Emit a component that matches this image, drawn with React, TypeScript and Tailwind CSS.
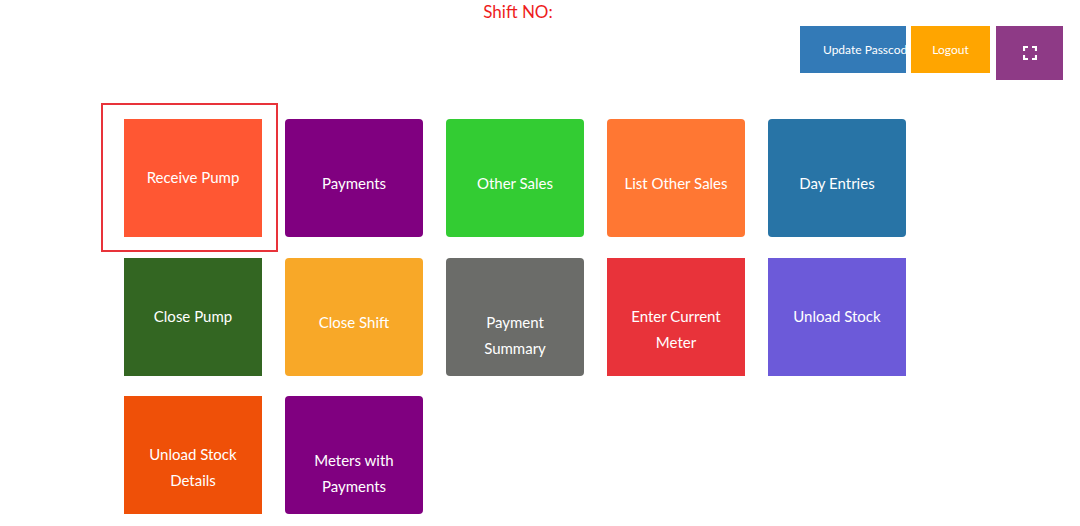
import React from "react";

type Tile = { label: string[]; bg: string; rounded: boolean };

const tiles: Tile[] = [
  { label: ["Receive Pump"], bg: "bg-[#ff5733]", rounded: false },
  { label: ["Payments"], bg: "bg-[#800080]", rounded: true },
  { label: ["Other Sales"], bg: "bg-[#33cc33]", rounded: true },
  { label: ["List Other Sales"], bg: "bg-[#ff7733]", rounded: true },
  { label: ["Day Entries"], bg: "bg-[#2874a6]", rounded: true },
  { label: ["Close Pump"], bg: "bg-[#336622]", rounded: false },
  { label: ["Close Shift"], bg: "bg-[#f8a828]", rounded: true },
  { label: ["Payment", "Summary"], bg: "bg-[#6b6c69]", rounded: true },
  { label: ["Enter Current", "Meter"], bg: "bg-[#e8333a]", rounded: false },
  { label: ["Unload Stock"], bg: "bg-[#6c5ad9]", rounded: false },
  { label: ["Unload Stock", "Details"], bg: "bg-[#ef5008]", rounded: false },
  { label: ["Meters with", "Payments"], bg: "bg-[#800080]", rounded: true },
];

function FullscreenIcon() {
  return (
    <svg width="14" height="14" viewBox="0 0 14 14" fill="none" stroke="white" strokeWidth="2.2">
      <path d="M1 5V1h4" />
      <path d="M9 1h4v4" />
      <path d="M13 9v4H9" />
      <path d="M5 13H1V9" />
    </svg>
  );
}

export default function App() {
  return (
    <div
      className="w-[1080px] h-[526px] bg-white relative overflow-hidden"
      style={{ fontFamily: "Lato, 'Open Sans', sans-serif" }}
    >
      <div className="h-[26px] flex justify-center">
        <div className="text-[17px] leading-[24px] text-[#ee1c1c] ml-[-44px]">Shift NO:</div>
      </div>
      <div className="flex justify-end items-start pr-[17px] gap-[5px] h-[77px]">
        <div className="w-[106px] h-[47px] bg-[#337ab7] text-white text-[12px] flex items-center pl-[23px] overflow-hidden whitespace-nowrap">
          Update Passcode
        </div>
        <div className="w-[79px] h-[47px] bg-[#ffa500] text-white text-[12px] flex items-center justify-center">
          Logout
        </div>
        <div className="w-[67px] h-[54px] bg-[#8e3a86] flex items-center justify-center ml-[1px]">
          <FullscreenIcon />
        </div>
      </div>
      <div className="pl-[124px] pt-[16px] relative">
        <div className="absolute left-[101px] top-0 w-[177px] h-[149px] border-2 border-[#e8333a] pointer-events-none" />
        <div className="grid grid-cols-[repeat(5,138px)] auto-rows-[118px] gap-x-[23px] gap-y-[20.5px]">
          {tiles.map((t, i) => (
            <div
              key={i}
              className={`${t.bg} ${t.rounded ? "rounded-[4px] pt-[51px]" : "pt-[45px]"} text-white text-[15px] leading-[26px] text-center`}
            >
              {t.label.map((l, j) => (
                <div key={j}>{l}</div>
              ))}
            </div>
          ))}
        </div>
      </div>
    </div>
  );
}
